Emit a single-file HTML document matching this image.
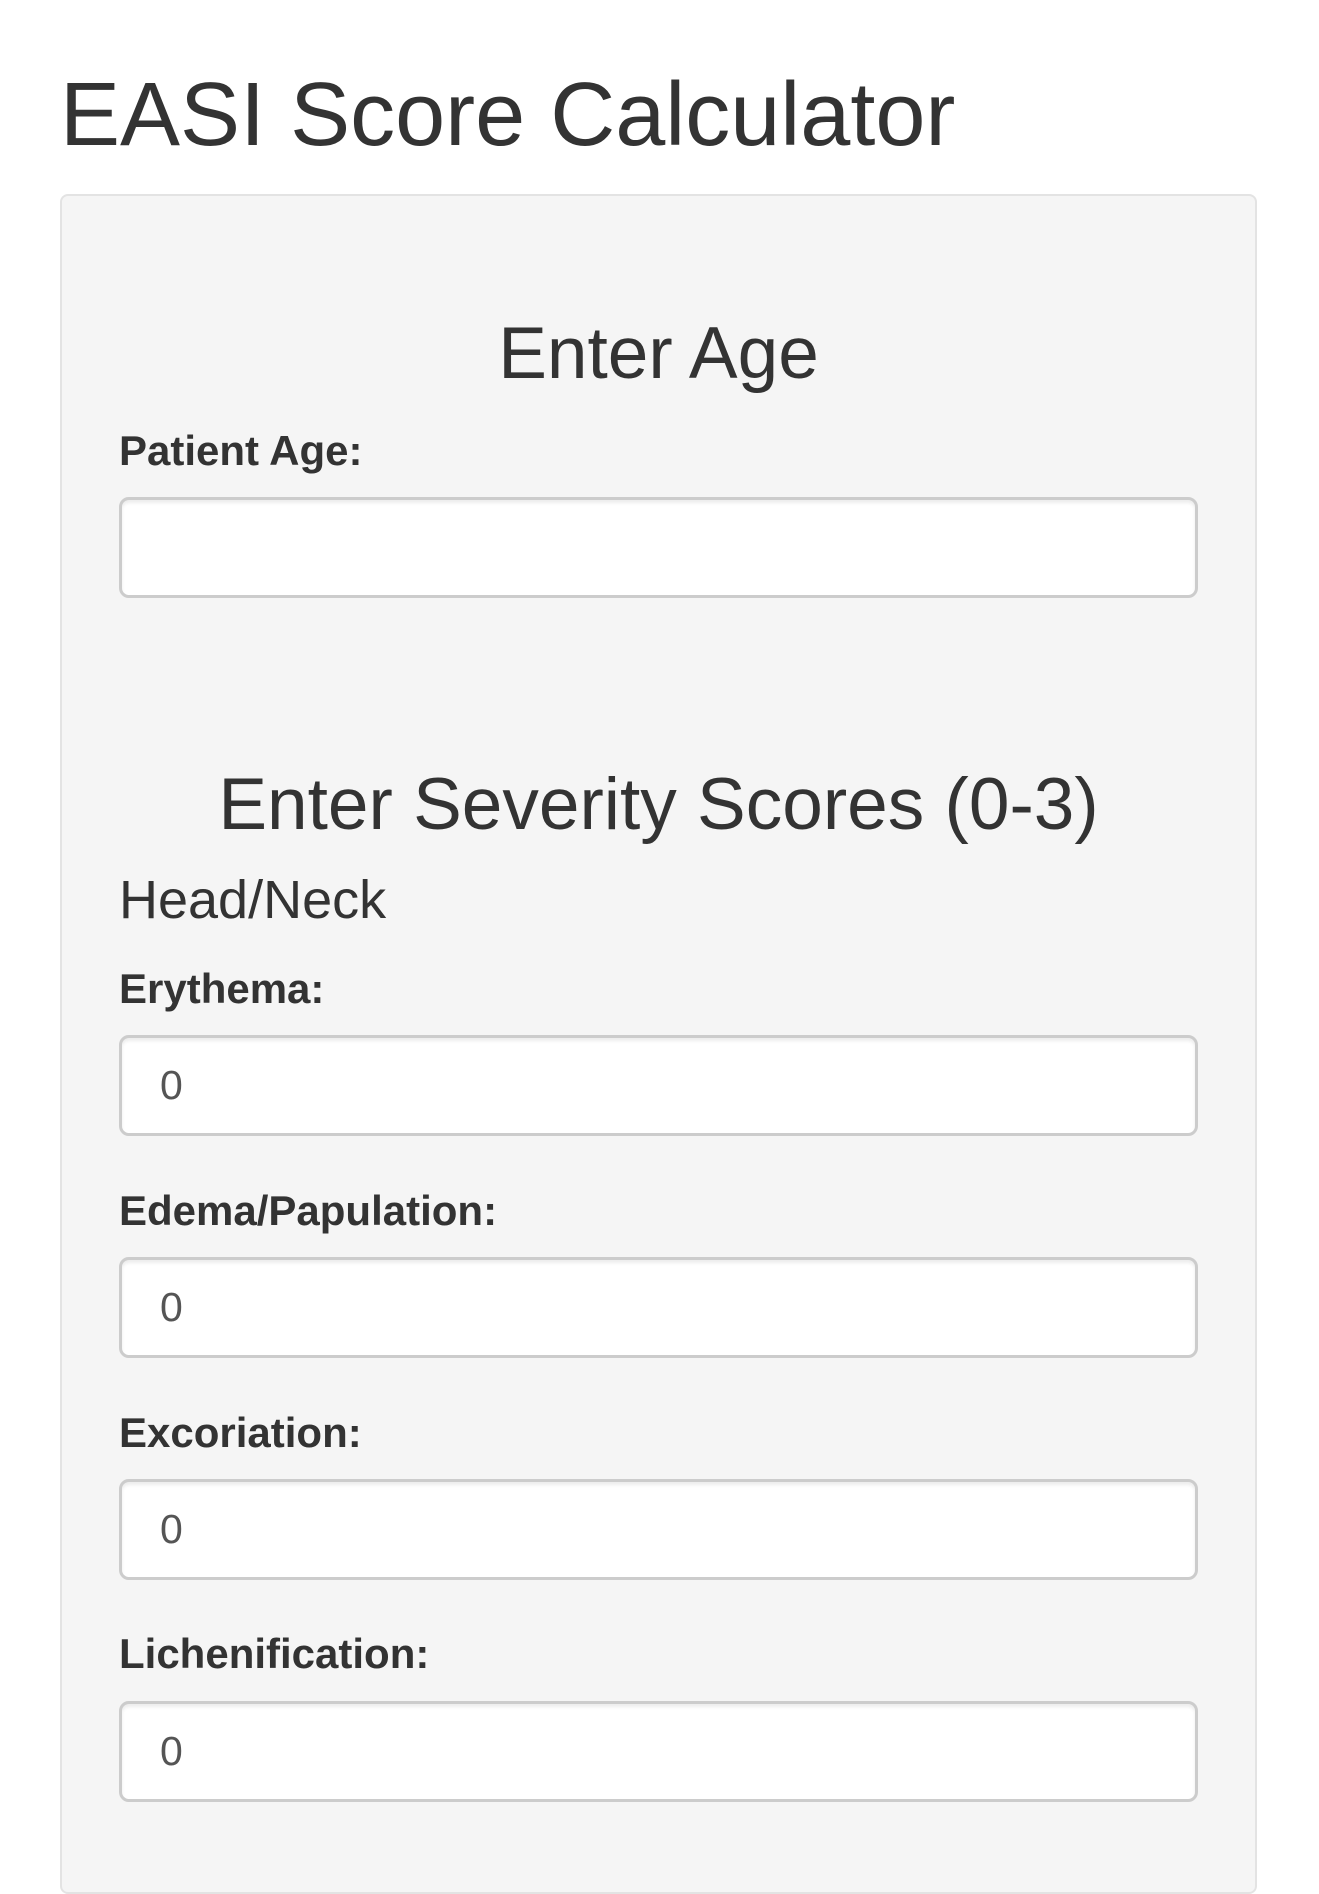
<!DOCTYPE html>
<html><head><meta charset="utf-8">
<style>
html,body{margin:0;padding:0;background:#fff;width:1319px;height:1843px;overflow:hidden;font-family:"Liberation Sans",Arial,sans-serif;color:#333;}
.a{position:absolute;line-height:1;white-space:nowrap;}
.panel{position:absolute;left:60px;top:194px;width:1197px;height:1700px;background:#f5f5f5;border:2px solid #e3e3e3;border-radius:8px;box-sizing:border-box;}
.lbl{font-size:42px;font-weight:bold;left:119px;}
.inp{position:absolute;left:119px;width:1079px;height:101px;box-sizing:border-box;background:#fff;border:3px solid #ccc;border-radius:10px;box-shadow:inset 0 3px 3px rgba(0,0,0,.075);font-size:41px;color:#555;line-height:95px;padding-left:38px;}
</style></head><body>
<div class="a" style="left:60px;top:70px;font-size:90px;">EASI Score Calculator</div>
<div class="panel"></div>
<div class="a" style="left:60px;width:1197px;text-align:center;top:317px;font-size:73px;">Enter Age</div>
<div class="a lbl" style="top:430px;">Patient Age:</div>
<div class="inp" style="top:497px;"></div>
<div class="a" style="left:60px;width:1197px;text-align:center;top:768px;font-size:73px;">Enter Severity Scores (0-3)</div>
<div class="a" style="left:119px;top:873px;font-size:54px;">Head/Neck</div>
<div class="a lbl" style="top:968px;">Erythema:</div>
<div class="inp" style="top:1035px;">0</div>
<div class="a lbl" style="top:1190px;">Edema/Papulation:</div>
<div class="inp" style="top:1257px;">0</div>
<div class="a lbl" style="top:1412px;">Excoriation:</div>
<div class="inp" style="top:1479px;">0</div>
<div class="a lbl" style="top:1633px;">Lichenification:</div>
<div class="inp" style="top:1701px;">0</div>
</body></html>
